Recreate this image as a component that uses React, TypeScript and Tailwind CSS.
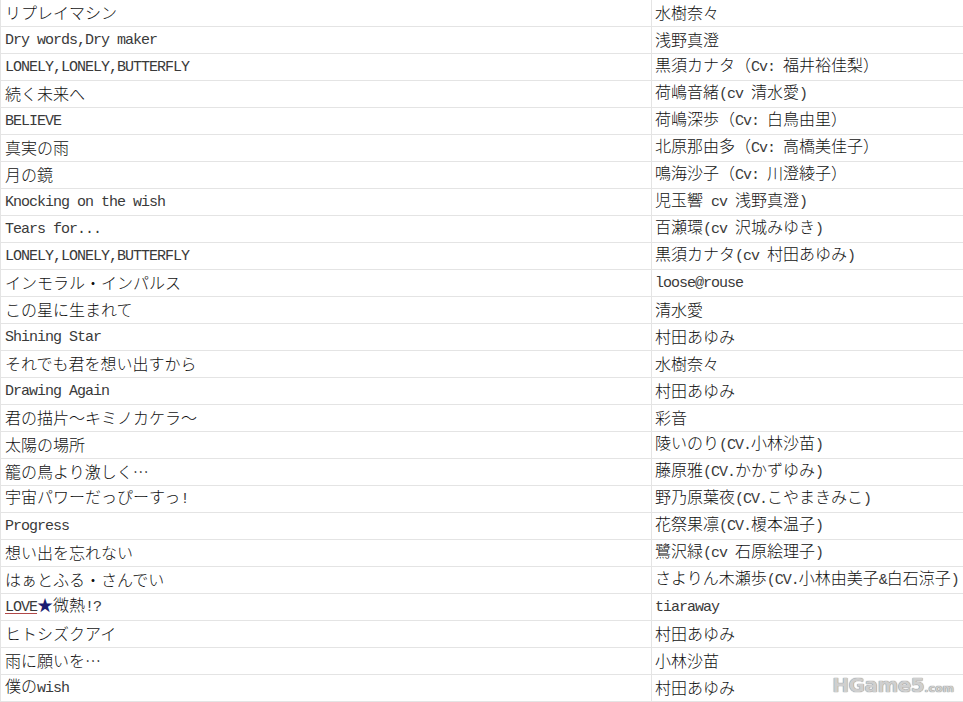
import React from "react"

const rows: [string, string][] = [
    ["リプレイマシン", "水樹奈々"],
    ["Dry words,Dry maker", "浅野真澄"],
    ["LONELY,LONELY,BUTTERFLY", "黒須カナタ（Cv: 福井裕佳梨）"],
    ["続く未来へ", "荷嶋音緒(cv 清水愛)"],
    ["BELIEVE", "荷嶋深歩（Cv: 白鳥由里）"],
    ["真実の雨", "北原那由多（Cv: 高橋美佳子）"],
    ["月の鏡", "鳴海沙子（Cv: 川澄綾子）"],
    ["Knocking on the wish", "児玉響 cv 浅野真澄)"],
    ["Tears for...", "百瀬環(cv 沢城みゆき)"],
    ["LONELY,LONELY,BUTTERFLY", "黒須カナタ(cv 村田あゆみ)"],
    ["インモラル・インパルス", "loose@rouse"],
    ["この星に生まれて", "清水愛"],
    ["Shining Star", "村田あゆみ"],
    ["それでも君を想い出すから", "水樹奈々"],
    ["Drawing Again", "村田あゆみ"],
    ["君の描片～キミノカケラ～", "彩音"],
    ["太陽の場所", "陵いのり(CV.小林沙苗)"],
    ["籠の鳥より激しく…", "藤原雅(CV.かかずゆみ)"],
    ["宇宙パワーだっぴーすっ!", "野乃原葉夜(CV.こやまきみこ)"],
    ["Progress", "花祭果凛(CV.榎本温子)"],
    ["想い出を忘れない", "鷺沢緑(cv 石原絵理子)"],
    ["はぁとふる・さんでい", "さよりん木瀬歩(CV.小林由美子&白石涼子)"],
    ["LOVE★微熱!?", "tiaraway"],
    ["ヒトシズクアイ", "村田あゆみ"],
    ["雨に願いを…", "小林沙苗"],
    ["僕のwish", "村田あゆみ"],
]

const mono = "font-['Liberation_Mono',monospace] text-[15px] tracking-[-1px] text-[#3a3a3a] whitespace-pre"

// half-width runs get a narrow mono face, like the old gothic bitmap font
function Txt({ s }: { s: string }) {
    const parts = s.split(/([\x20-\x7e]+)/).filter(Boolean)
    return (
        <>
            {parts.map((p, i) =>
                /^[\x20-\x7e]+$/.test(p) ? (
                    <span key={i} className={mono}>
                        {p}
                    </span>
                ) : (
                    <span key={i}>{p}</span>
                )
            )}
        </>
    )
}

function Song({ s }: { s: string }) {
    if (s === "LOVE★微熱!?") {
        return (
            <>
                <span className={mono + " underline decoration-[#b04848] underline-offset-2"}>LOVE</span>
                <span className="text-[#1c1c72]">★</span>
                <Txt s="微熱!?" />
            </>
        )
    }
    return <Txt s={s} />
}

export default function App() {
    return (
        <div className="relative w-[963px] h-[702px] overflow-hidden bg-white text-[#111] text-[16px] leading-none font-['Noto_Sans_CJK_JP',sans-serif] font-light">
            <div className="grid grid-cols-[651px_1fr]">
                {rows.map(([song, artist], i) => (
                    <React.Fragment key={i}>
                        <div className="h-[27px] flex items-center pl-1 border-l border-b border-[#e4e4e4] whitespace-nowrap">
                            <span className="pb-[3px]">
                                <Song s={song} />
                            </span>
                        </div>
                        <div className="h-[27px] flex items-center pl-[3px] border-l border-b border-[#e4e4e4] whitespace-nowrap">
                            <span className="pb-[3px]">
                                <Txt s={artist} />
                            </span>
                        </div>
                    </React.Fragment>
                ))}
            </div>

            {/* watermark */}
            <div className="absolute right-[9px] bottom-[7px] flex items-baseline font-bold font-['DejaVu_Sans',sans-serif] text-[#cfcfcf] [text-shadow:0_0_1px_#8c8c8c,0_0_1px_#8c8c8c]">
                <span className="text-[20px] tracking-[-0.5px]">HGame5</span>
                <span className="text-[11px]">.com</span>
            </div>
        </div>
    )
}
